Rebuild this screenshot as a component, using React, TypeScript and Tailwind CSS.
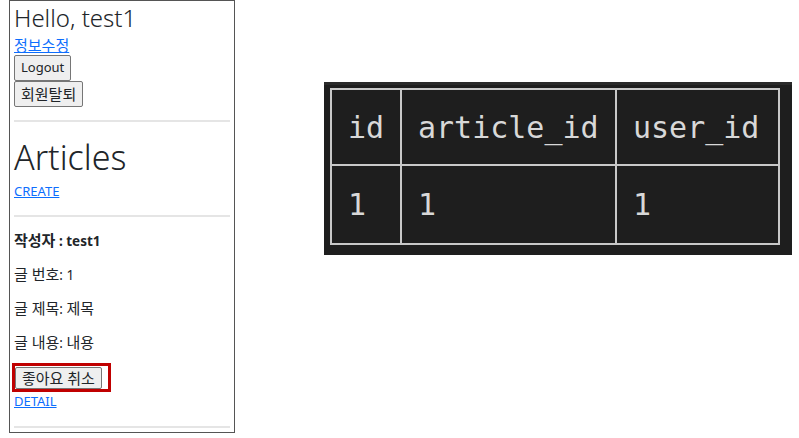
function K({ children }: { children: React.ReactNode }) {
  return <span className="text-[15px] leading-[16px]">{children}</span>;
}

function LeftPanel() {
  const btn = "self-start flex items-center px-[6px] text-[13px] bg-[#efefef] border border-[#767676] rounded-[2px]";
  return (
    <div className="relative flex flex-col w-[226px] h-[433px] border border-[#555] px-[4px] text-[#212529] font-['Noto_Sans','Noto_Sans_CJK_KR',sans-serif]">
      <h3 className="text-[24px] leading-[34px] font-light">Hello, test1</h3>
      <a href="#" className="text-[15px] leading-[20px] text-[#0d6efd] underline">
        정보수정
      </a>
      <button className={`${btn} h-[26px]`}>Logout</button>
      <button className={`${btn} h-[26px]`}>
        <K>회원탈퇴</K>
      </button>
      <hr className="mt-[13px] border-t-2 border-[#e5e5e5]" />
      <h1 className="mt-[14px] text-[34px] leading-[42px] font-light">Articles</h1>
      <a href="#" className="mt-[3px] text-[13px] leading-[20px] text-[#0d6efd] underline">
        CREATE
      </a>
      <hr className="mt-[14px] border-t-2 border-[#e5e5e5]" />
      <p className="mt-[14px] text-[13.5px] leading-[20px] font-bold">
        <K>작성자</K> : test1
      </p>
      <p className="mt-[14px] text-[13.5px] leading-[20px]">
        <K>글 번호</K>: 1
      </p>
      <p className="mt-[14px] text-[13.5px] leading-[20px]">
        <K>글 제목</K>: <K>제목</K>
      </p>
      <p className="mt-[14px] text-[13.5px] leading-[20px]">
        <K>글 내용</K>: <K>내용</K>
      </p>
      <button className={`${btn} mt-[14px] ml-[1px] h-[22px]`}>
        <K>좋아요 취소</K>
      </button>
      <a href="#" className="mt-[3px] text-[13px] leading-[18px] text-[#0d6efd] underline">
        DETAIL
      </a>
      <hr className="mt-[16px] border-t-2 border-[#e5e5e5]" />
      <div className="absolute left-[2px] top-[362px] w-[99px] h-[29px] border-[3px] border-[#c00000]" />
    </div>
  );
}

function LikesTable() {
  const cell = "border-2 border-[#c8c8c8] pl-[16px] text-left font-normal";
  return (
    <div className="ml-[89px] mt-[82px] w-[468px] h-[173px] bg-[#1e1e1e] border-t-[3px] border-[#2a2a2a] pl-[6px] pt-[3px]">
      <table className="border-collapse text-[30px] text-[#d8d8d8] font-['DejaVu_Sans_Mono',monospace]">
        <thead>
          <tr className="h-[76px]">
            <th className={`${cell} w-[70px]`}>id</th>
            <th className={`${cell} w-[215px]`}>article_id</th>
            <th className={`${cell} w-[163px]`}>user_id</th>
          </tr>
        </thead>
        <tbody>
          <tr className="h-[79px]">
            <td className={cell}>1</td>
            <td className={cell}>1</td>
            <td className={cell}>1</td>
          </tr>
        </tbody>
      </table>
    </div>
  );
}

export default function App() {
  return (
    <div className="flex items-start w-[799px] h-[438px] bg-white pl-[9px]">
      <LeftPanel />
      <LikesTable />
    </div>
  );
}
